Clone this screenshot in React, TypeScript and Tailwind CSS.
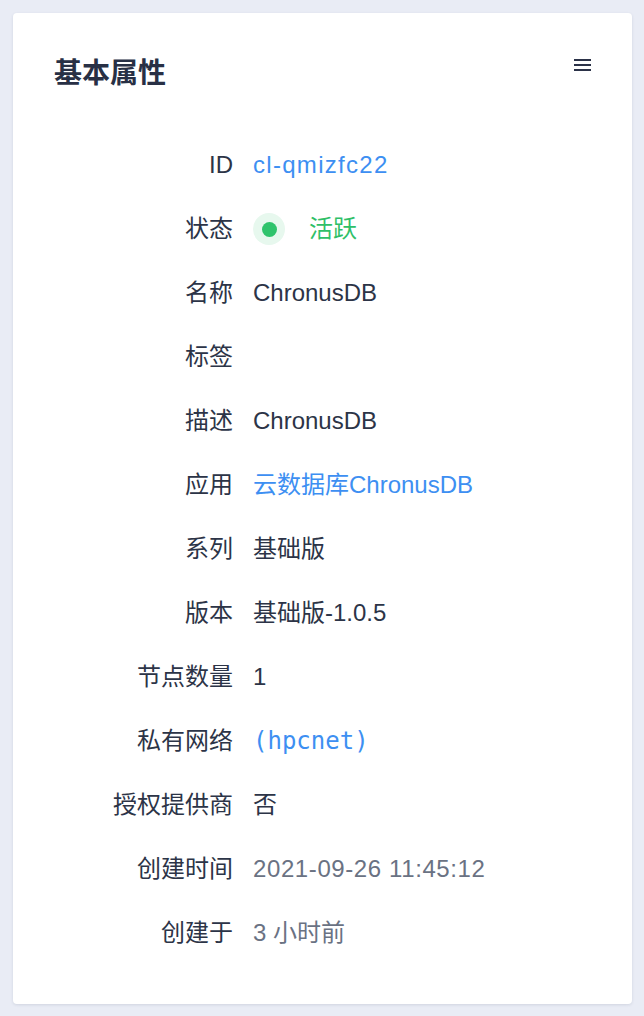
const font = { fontFamily: '"Liberation Sans", "Noto Sans CJK SC", sans-serif' }

type Row = { label: string; value?: React.ReactNode }

function StatusValue() {
  return (
    <div className="flex items-center">
      <span className="flex h-[32px] w-[32px] items-center justify-center rounded-full bg-[#e7f8ee]">
        <span className="h-[15px] w-[15px] rounded-full bg-[#2fc36c]" />
      </span>
      <span className="ml-[24px] text-[#2fbf68]">活跃</span>
    </div>
  )
}

const rows: Row[] = [
  { label: 'ID', value: <span className="tracking-[1.3px] text-[#3d8ff2]">cl-qmizfc22</span> },
  { label: '状态', value: <StatusValue /> },
  { label: '名称', value: 'ChronusDB' },
  { label: '标签' },
  { label: '描述', value: 'ChronusDB' },
  { label: '应用', value: <span className="text-[#3d8ff2]">云数据库ChronusDB</span> },
  { label: '系列', value: '基础版' },
  { label: '版本', value: '基础版-1.0.5' },
  { label: '节点数量', value: '1' },
  {
    label: '私有网络',
    value: (
      <span className="text-[#3d8ff2]" style={{ fontFamily: '"DejaVu Sans Mono", monospace' }}>
        (hpcnet)
      </span>
    ),
  },
  { label: '授权提供商', value: '否' },
  { label: '创建时间', value: <span className="tracking-[0.6px] text-[#6a7283]">2021-09-26 11:45:12</span> },
  { label: '创建于', value: <span className="text-[#6a7283]">3 小时前</span> },
]

export default function App() {
  return (
    <div className="min-h-[1016px] bg-[#e9ecf5] p-[13px] pr-[12px]" style={font}>
      <div className="h-[991px] rounded-[4px] bg-white px-[41px] pt-[41px] shadow-[0_1px_3px_rgba(40,50,80,0.12)]">
        <div className="flex items-start justify-between">
          <h3 className="text-[28px] font-semibold leading-[40px] text-[#283045]">基本属性</h3>
          <button className="mt-[5px] flex w-[17px] flex-col gap-[3.3px]">
            <span className="h-[1.7px] w-full bg-[#2b3248]" />
            <span className="h-[1.7px] w-full bg-[#2b3248]" />
            <span className="h-[1.7px] w-full bg-[#2b3248]" />
          </button>
        </div>

        <div className="mt-[39px] flex flex-col">
          {rows.map((r) => (
            <div key={r.label} className="flex h-[64px] items-center text-[24px] text-[#2c3447]">
              <div className="w-[179px] shrink-0 text-right">{r.label}</div>
              <div className="ml-[20px]">{r.value}</div>
            </div>
          ))}
        </div>
      </div>
    </div>
  )
}
